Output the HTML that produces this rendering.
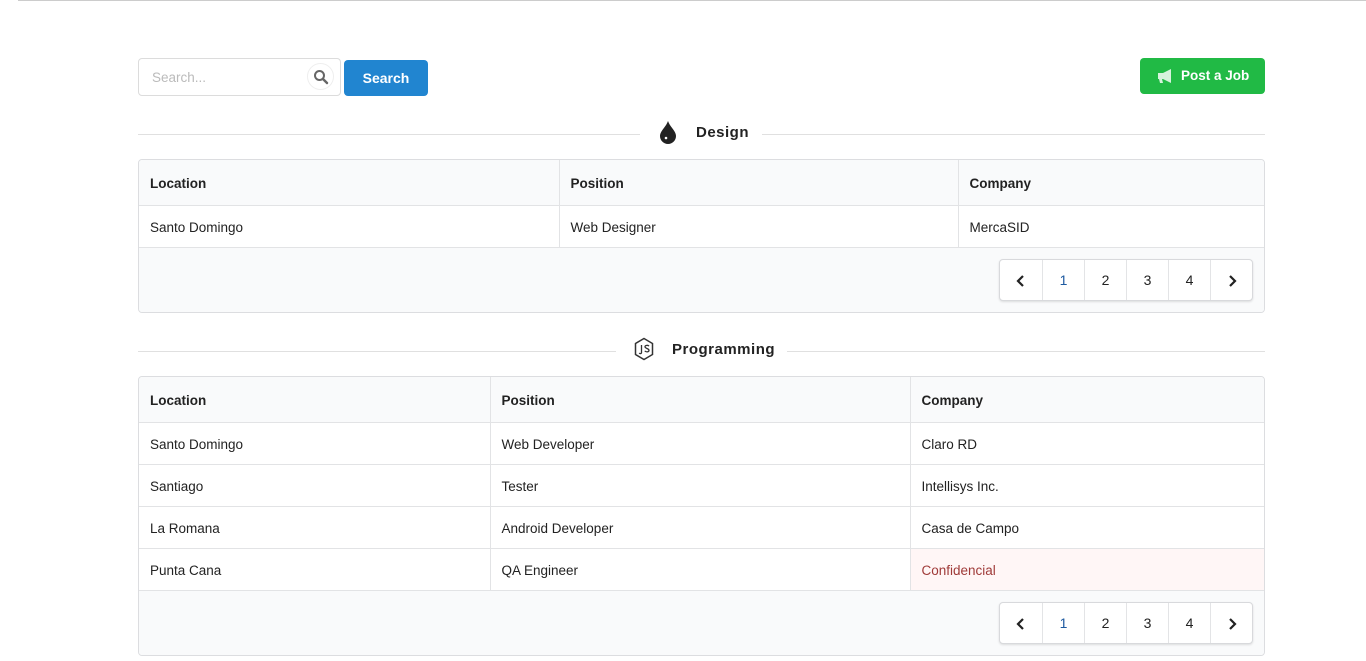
<!DOCTYPE html><html><head><style>
body{margin:0;width:1366px;height:661px;overflow:hidden;background:#fff;font-family:"Liberation Sans",sans-serif;font-size:14px;color:#222;position:relative}
.a{position:absolute;box-sizing:border-box}
table{border-collapse:collapse;width:100%;table-layout:fixed}
.tb{border:1px solid #dcdde0;border-radius:4px;overflow:hidden}
th{background:#f9fafb;text-align:left;font-weight:bold;height:44px;padding:0 11px;border-bottom:1px solid #e2e3e5;font-size:13.5px;padding-top:1px}
td{height:40px;padding:0 11px;border-bottom:1px solid #e2e3e5;font-size:13.5px;padding-top:1px}
th+th,td+td{border-left:1px solid #e2e3e5}
.ft{background:#f9fafb;position:relative}
.pg{position:absolute;right:11px;top:11px;display:flex;border:1px solid #d8d9dc;border-radius:4px;background:#fff;box-shadow:0 1px 2px rgba(0,0,0,.12)}
.pg div{width:41px;height:40px;line-height:40px;text-align:center;border-left:1px solid #e3e4e6;font-size:14px}
.pg div:first-child{border-left:0;width:42px}
.pg svg{vertical-align:middle}
.line{height:1px;background:#e0e0e0}
.hd{font-weight:bold;font-size:15px;letter-spacing:.5px;color:#222}
</style></head><body>
<div class="a line" style="left:18px;top:0;width:1348px;background:#ccc"></div>
<div class="a" style="left:138px;top:58px;width:203px;height:38px;border:1px solid #dcdcdc;border-radius:4px"></div>
<div class="a" style="left:152px;top:70px;color:#bbb;font-size:13.5px">Search...</div>
<div class="a" style="left:307px;top:63px;width:27px;height:27px;border:1px solid #eee;border-radius:50%"></div>
<svg class="a" style="left:313px;top:69px" width="16" height="16" viewBox="0 0 16 16"><circle cx="6.5" cy="6.5" r="4.5" fill="none" stroke="#666" stroke-width="2"/><path d="M10 10l4 4" stroke="#666" stroke-width="2.4" stroke-linecap="round"/></svg>
<div class="a" style="left:344px;top:60px;width:84px;height:36px;background:#2185d0;border-radius:4px;color:#fff;font-weight:bold;text-align:center;line-height:37px">Search</div>
<div class="a" style="left:1140px;top:58px;width:125px;height:36px;background:#21ba45;border-radius:4px;color:#fff;font-weight:bold;line-height:36px;padding-left:41px;font-size:13.5px">Post a Job</div>
<svg class="a" style="left:1157px;top:68px" width="18" height="16" viewBox="0 0 18 16"><path d="M1 5h5l8-4v14l-8-4H5l1 4H3L2 11H1z" fill="#d7f2dd"/></svg>

<div class="a line" style="left:138px;top:134px;width:502px"></div>
<div class="a line" style="left:762px;top:134px;width:503px"></div>
<svg class="a" style="left:659px;top:120px" width="18" height="24" viewBox="0 0 18 24"><path d="M9 1C7 7 1 11 1 16a8 8 0 0016 0C17 11 11 7 9 1z" fill="#222"/><circle cx="7" cy="18" r="1.3" fill="#fff"/></svg>
<div class="a hd" style="left:696px;top:124px">Design</div>

<div class="a tb" style="left:138px;top:159px;width:1127px;height:154px">
<table><colgroup><col style="width:420px"><col style="width:399px"><col></colgroup>
<tr><th>Location</th><th>Position</th><th>Company</th></tr>
<tr><td>Santo Domingo</td><td>Web Designer</td><td>MercaSID</td></tr></table>
<div class="ft" style="height:66px"><div class="pg"><div><svg width="10" height="12" viewBox="0 0 10 12"><path d="M7 1L2 6l5 5" fill="none" stroke="#222" stroke-width="2.2"/></svg></div><div style="color:#1e5aa0">1</div><div>2</div><div>3</div><div>4</div><div><svg width="10" height="12" viewBox="0 0 10 12"><path d="M3 1l5 5-5 5" fill="none" stroke="#222" stroke-width="2.2"/></svg></div></div></div>
</div>

<div class="a line" style="left:138px;top:351px;width:478px"></div>
<div class="a line" style="left:787px;top:351px;width:478px"></div>
<svg class="a" style="left:633px;top:337px" width="22" height="25" viewBox="0 0 22 25"><path d="M11 1.5l8.5 5v11L11 22.5 2.5 17.5v-11z" fill="none" stroke="#333" stroke-width="1.5"/><path d="M8.5 8v7.5c0 1.2-1.5 1.5-2.3.5M16 9.2c-.8-1.2-4-1.3-4 .6 0 2 4 1.3 4 3.5 0 2-3.2 2-4.2.5" fill="none" stroke="#333" stroke-width="1.3"/></svg>
<div class="a hd" style="left:672px;top:341px">Programming</div>

<div class="a tb" style="left:138px;top:376px;width:1127px;height:280px">
<table><colgroup><col style="width:351px"><col style="width:420px"><col></colgroup>
<tr><th>Location</th><th>Position</th><th>Company</th></tr>
<tr><td>Santo Domingo</td><td>Web Developer</td><td>Claro RD</td></tr>
<tr><td>Santiago</td><td>Tester</td><td>Intellisys Inc.</td></tr>
<tr><td>La Romana</td><td>Android Developer</td><td>Casa de Campo</td></tr>
<tr><td>Punta Cana</td><td>QA Engineer</td><td style="background:#fff6f6;color:#9f3a38">Confidencial</td></tr></table>
<div class="ft" style="height:66px"><div class="pg"><div><svg width="10" height="12" viewBox="0 0 10 12"><path d="M7 1L2 6l5 5" fill="none" stroke="#222" stroke-width="2.2"/></svg></div><div style="color:#1e5aa0">1</div><div>2</div><div>3</div><div>4</div><div><svg width="10" height="12" viewBox="0 0 10 12"><path d="M3 1l5 5-5 5" fill="none" stroke="#222" stroke-width="2.2"/></svg></div></div></div>
</div>
</body></html>
